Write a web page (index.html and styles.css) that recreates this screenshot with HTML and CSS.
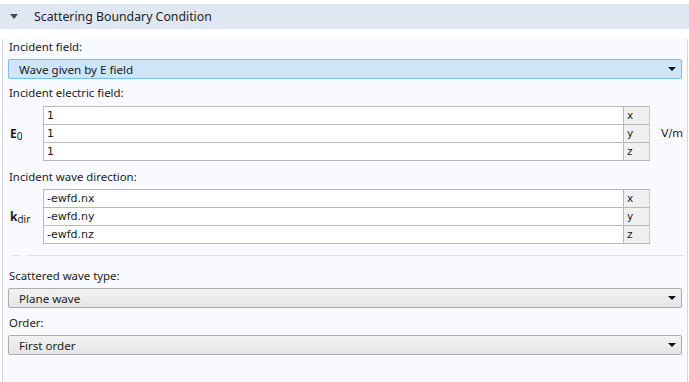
FILE: index.html
```html
<!DOCTYPE html>
<html lang="en">

<head>
  <meta charset="UTF-8">
  <title>Scattering Boundary Condition</title>
  <link rel="stylesheet" href="styles.css">
</head>

<body>
  <div id="panel">
    <div class="section-head">
      <span class="caret"></span>
      <span class="section-title">Scattering Boundary Condition</span>
    </div>
    <div class="section-body">
      <div class="label first">Incident field:</div>
      <div class="combo selected">
        <span>Wave given by E field</span>
        <span class="arrow"></span>
      </div>

      <div class="label after-combo">Incident electric field:</div>
      <div class="vector">
        <div class="sym"><b>E</b><sub>0</sub></div>
        <div class="cells">
          <div class="row"><div class="cell">1</div><div class="comp">x</div></div>
          <div class="row"><div class="cell">1</div><div class="comp">y</div></div>
          <div class="row"><div class="cell">1</div><div class="comp">z</div></div>
        </div>
        <div class="unit">V/m</div>
      </div>

      <div class="label after-vector">Incident wave direction:</div>
      <div class="vector">
        <div class="sym"><b>k</b><sub>dir</sub></div>
        <div class="cells">
          <div class="row"><div class="cell">-ewfd.nx</div><div class="comp">x</div></div>
          <div class="row"><div class="cell">-ewfd.ny</div><div class="comp">y</div></div>
          <div class="row"><div class="cell">-ewfd.nz</div><div class="comp">z</div></div>
        </div>
        <div class="unit"></div>
      </div>

      <div class="separator"><span class="dash"></span><span class="line"></span></div>

      <div class="label after-sep">Scattered wave type:</div>
      <div class="combo">
        <span>Plane wave</span>
        <span class="arrow"></span>
      </div>

      <div class="label after-combo2">Order:</div>
      <div class="combo">
        <span>First order</span>
        <span class="arrow"></span>
      </div>
    </div>
  </div>
</body>

</html>
```

FILE: styles.css
```css
body {
  margin: 0;
  background: #ffffff;
  font-family: "Noto Sans", "Open Sans", sans-serif;
  font-size: 11.4px;
  color: #1a1a1a;
  --panel-bg: #f8faff;
  --line: #d4d8de;
}

#panel {
  padding-top: 4px;
  width: 689px;
}

.section-head {
  height: 25px;
  background: #dfe7f3;
  display: flex;
  align-items: center;
}

.caret {
  width: 0;
  height: 0;
  margin-left: 10px;
  margin-right: 16px;
  border-left: 4px solid transparent;
  border-right: 4px solid transparent;
  border-top: 5px solid #4a4a4a;
}

.section-title {
  font-size: 12.3px;
  color: #1e1e1e;
}

.section-body {
  margin-left: 2px;
  width: 684px;
  height: 349px;
  background: var(--panel-bg);
  border-left: 1px solid var(--line);
  border-right: 1px solid var(--line);
}

.label {
  height: 16px;
  line-height: 16px;
  padding-left: 6px;
}

.label.first {
  margin-top: 10px;
}

.label.after-combo {
  margin-top: 6px;
}

.label.after-vector {
  margin-top: 8px;
}

.label.after-sep {
  margin-top: 12px;
}

.label.after-combo2 {
  margin-top: 7px;
}

.combo {
  margin: 4px 0 0 5px;
  width: 662px;
  height: 18px;
  border: 1px solid #acacac;
  border-radius: 2px;
  background: linear-gradient(#f2f2f2, #e6e6e6);
  display: flex;
  align-items: center;
  justify-content: space-between;
  padding: 0 0 0 10px;
  font-size: 11.6px;
}

.combo.selected {
  background: #cde6fa;
  border-color: #7dbcf0;
}

.arrow {
  width: 0;
  height: 0;
  margin-right: 5px;
  border-left: 4px solid transparent;
  border-right: 4px solid transparent;
  border-top: 4px solid #111;
}

.vector {
  display: flex;
  align-items: center;
  margin-top: 5px;
}

.label.after-vector + .vector {
  margin-top: 4px;
}

.sym {
  width: 40px;
  padding-left: 7px;
  box-sizing: border-box;
  font-size: 12px;
}

.sym b {
  font-weight: bold;
}

.sym sub {
  font-size: 10px;
  vertical-align: -2px;
}

.cells {
  width: 607px;
  border-bottom: 1px solid #b9b9b9;
}

.row {
  display: flex;
  height: 18px;
}

.cell {
  flex: 1;
  background: #ffffff;
  border: 1px solid #b9b9b9;
  border-bottom: none;
  padding-left: 3px;
  font-family: "DejaVu Sans", sans-serif;
  font-size: 11px;
  line-height: 17px;
}

.comp {
  width: 22px;
  background: #f0f0f0;
  border-top: 1px solid #b9b9b9;
  border-right: 1px solid #c8c8c8;
  padding-left: 3px;
  font-family: "DejaVu Sans", sans-serif;
  font-size: 10.5px;
  line-height: 17px;
}

.unit {
  margin-left: 11px;
  font-family: "DejaVu Sans", sans-serif;
  font-size: 11px;
}

.separator {
  display: flex;
  margin-top: 11px;
  padding-left: 8px;
  height: 1px;
}

.separator .dash {
  width: 9px;
  background: #dde1e8;
}

.separator .line {
  margin-left: 6px;
  width: 658px;
  background: #dde1e8;
}
```
